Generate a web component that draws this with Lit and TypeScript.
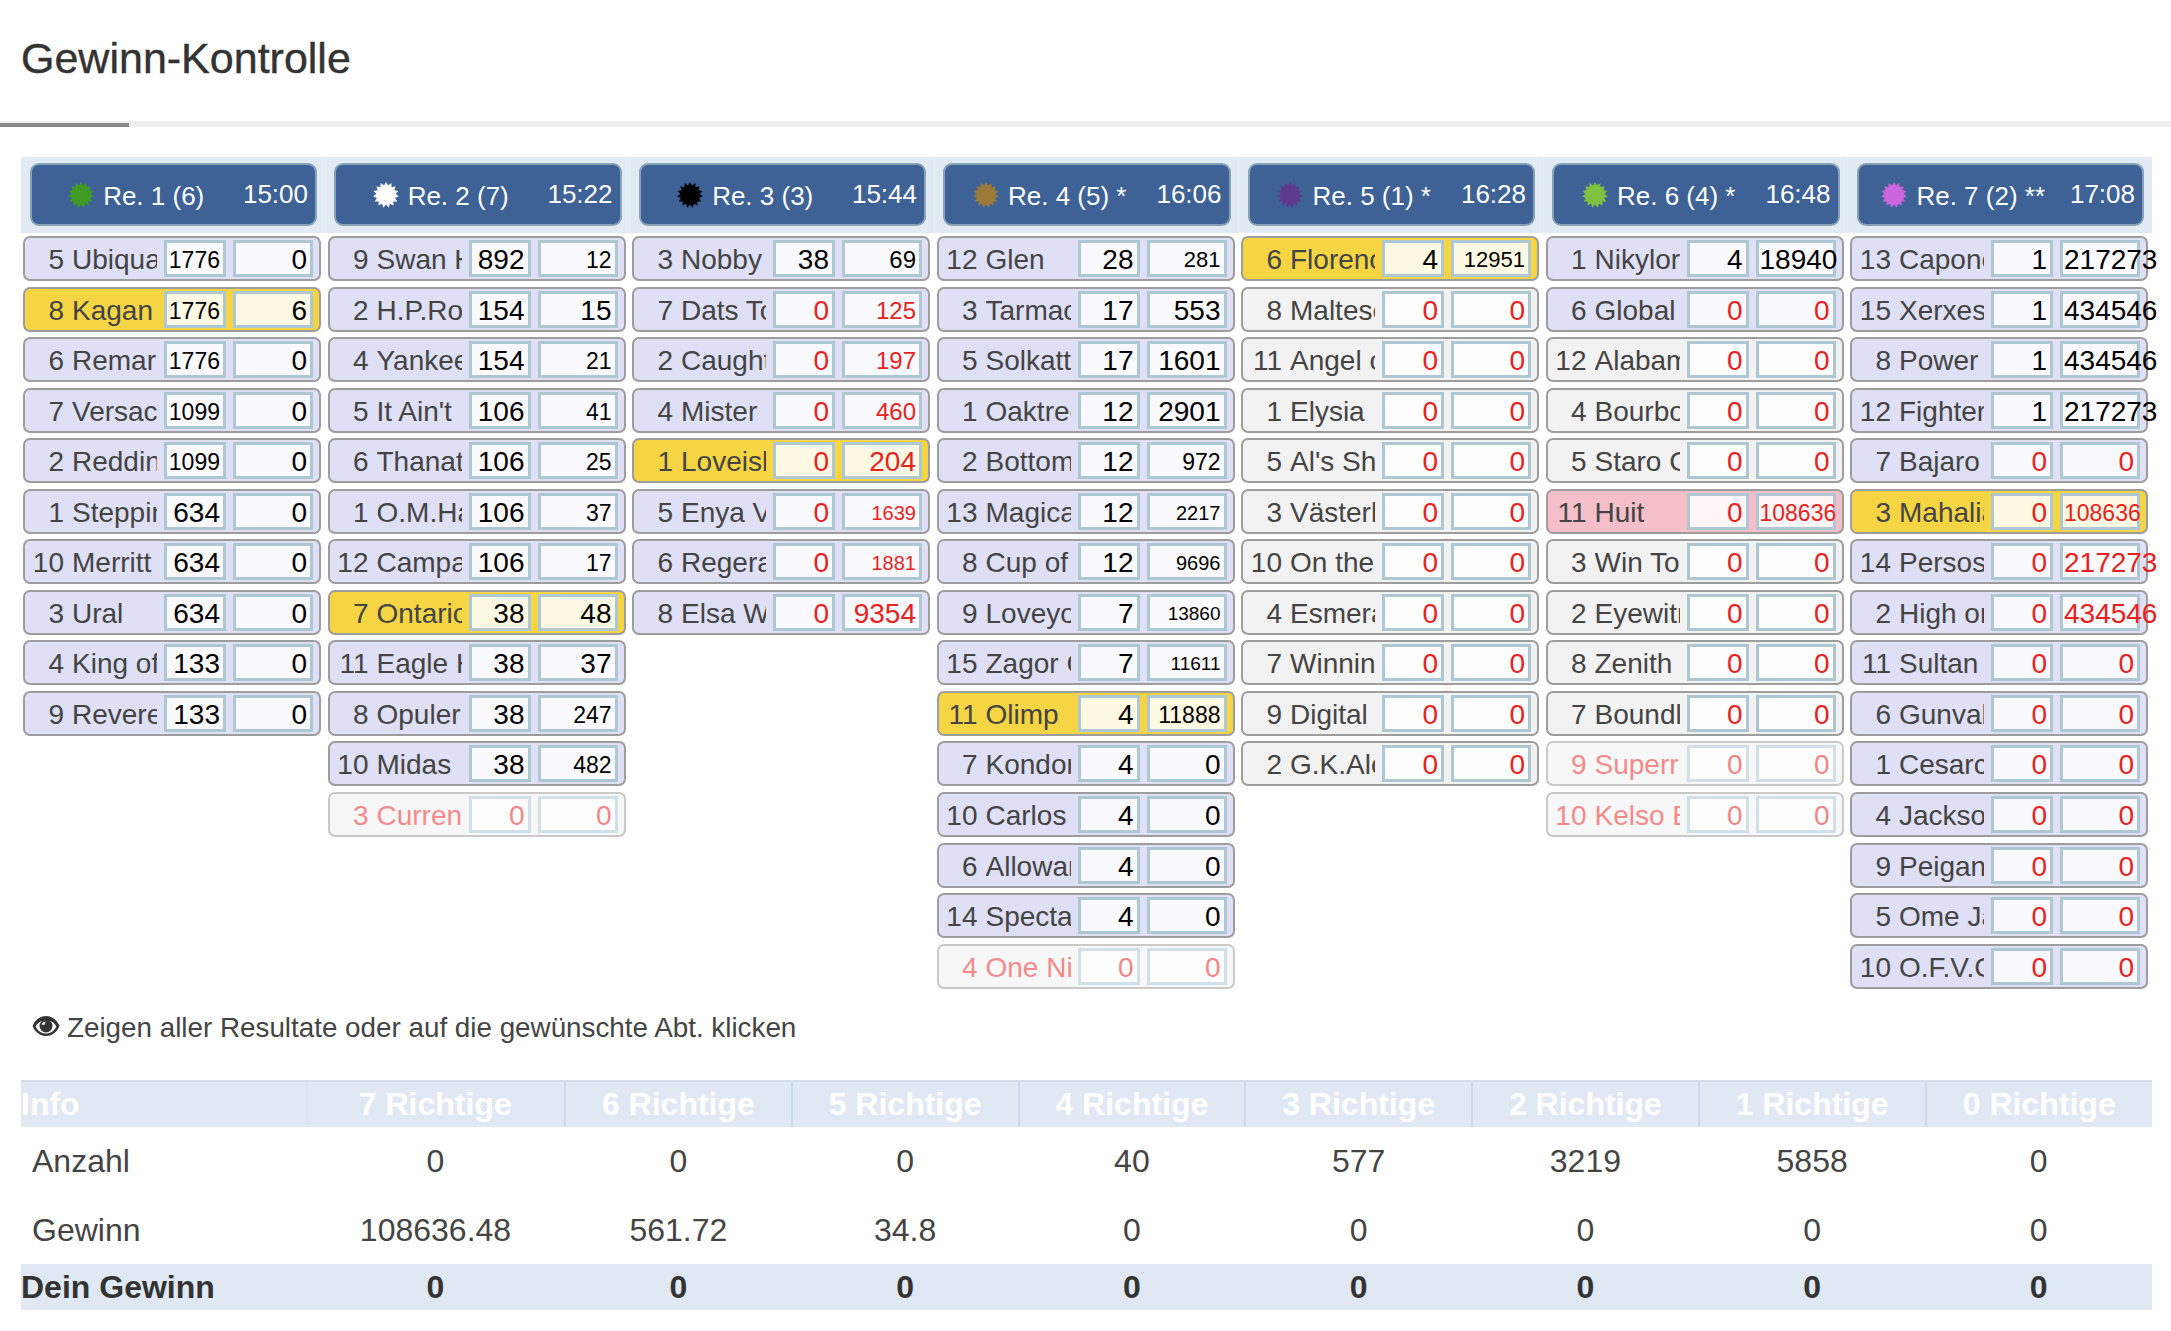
import { LitElement, html, css, svg } from "lit";
import { customElement } from "lit/decorators.js";

type Race = { label: string; time: string; star: string; rows: string[] };

// row format: number|name|first[:size]|second[:size]|state
const races: Race[] = [
  { label: "Re. 1 (6)", time: "15:00", star: "#3f9b24", rows: [
    "5|Ubiquarian|1776:23|0", "8|Kagan|1776:23|6|y", "6|Remarkable|1776:23|0", "7|Versace|1099:23|0", "2|Redding|1099:23|0",
    "1|Stepping|634|0", "10|Merritt|634|0", "3|Ural|634|0", "4|King of|133|0", "9|Revere|133|0" ] },
  { label: "Re. 2 (7)", time: "15:22", star: "#ffffff", rows: [
    "9|Swan Hill|892|12:23", "2|H.P.Rock|154|15", "4|Yankee|154|21:23", "5|It Ain't|106|41:23", "6|Thanatos|106|25:23",
    "1|O.M.Hall|106|37:23", "12|Campari|106|17:23", "7|Ontario|38|48|y", "11|Eagle Hill|38|37", "8|Opuler|38|247:23",
    "10|Midas|38|482:23", "3|Curren|0|0|x" ] },
  { label: "Re. 3 (3)", time: "15:44", star: "#000000", rows: [
    "3|Nobby|38|69:24", "7|Dats Torn|0|125:24", "2|Caught|0|197:24", "4|Mister|0|460:24", "1|Loveisland|0|204|y",
    "5|Enya Vale|0|1639:20", "6|Regera|0|1881:20", "8|Elsa West|0|9354" ] },
  { label: "Re. 4 (5) *", time: "16:06", star: "#9b7a3a", rows: [
    "12|Glen|28|281:22", "3|Tarmac|17|553", "5|Solkatten|17|1601", "1|Oaktree|12|2901", "2|Bottom|12|972:23",
    "13|Magical|12|2217:20", "8|Cup of|12|9696:20", "9|Loveyou|7|13860:19", "15|Zagor City|7|11611:19", "11|Olimp|4|11888:23|y",
    "7|Kondor|4|0", "10|Carlos|4|0", "6|Allowance|4|0", "14|Spectacle|4|0", "4|One Night|0|0|x" ] },
  { label: "Re. 5 (1) *", time: "16:28", star: "#5e3a8c", rows: [
    "6|Florence|4|12951:22|y", "8|Maltese|0|0|g", "11|Angel of|0|0|g", "1|Elysia|0|0|g", "5|Al's Shadow|0|0|g",
    "3|Västerbo|0|0|g", "10|On the|0|0|g", "4|Esmerald|0|0|g", "7|Winning|0|0|g", "9|Digital|0|0|g", "2|G.K.Alonso|0|0|g" ] },
  { label: "Re. 6 (4) *", time: "16:48", star: "#7fc241", rows: [
    "1|Nikylord|4|18940", "6|Global|0|0", "12|Alabama|0|0|g", "4|Bourbon|0|0|g", "5|Staro City|0|0|g",
    "11|Huit|0|108636:23|p", "3|Win To|0|0|g", "2|Eyewitness|0|0|g", "8|Zenith|0|0|g", "7|Boundless|0|0|g",
    "9|Superrun|0|0|x", "10|Kelso Bay|0|0|x" ] },
  { label: "Re. 7 (2) **", time: "17:08", star: "#cc66dd", rows: [
    "13|Capone|1|217273", "15|Xerxes|1|434546", "8|Power|1|434546", "12|Fighter|1|217273", "7|Bajaro|0|0",
    "3|Mahalia|0|108636:23|y", "14|Persos|0|217273", "2|High on|0|434546", "11|Sultan|0|0", "6|Gunvald|0|0",
    "1|Cesarco|0|0", "4|Jackson|0|0", "9|Peigan|0|0", "5|Ome Jan|0|0", "10|O.F.V.City|0|0" ] },
];

const heads = ["7 Richtige", "6 Richtige", "5 Richtige", "4 Richtige", "3 Richtige", "2 Richtige", "1 Richtige", "0 Richtige"];
const anzahl = ["0", "0", "0", "40", "577", "3219", "5858", "0"];
const gewinn = ["108636.48", "561.72", "34.8", "0", "0", "0", "0", "0"];

function starPoints(n: number, cx: number, cy: number, outer: number, inner: number) {
  const pts: string[] = [];
  for (let i = 0; i < n * 2; i++) {
    const r = i % 2 ? inner : outer;
    const a = (Math.PI * i) / n - Math.PI / 2;
    pts.push(`${(cx + r * Math.cos(a)).toFixed(2)},${(cy + r * Math.sin(a)).toFixed(2)}`);
  }
  return pts.join(" ");
}

@customElement("app-root")
export class AppRoot extends LitElement {
  static styles = css`
    :host {
      display: block;
      background: #fff;
      font-family: "Liberation Sans", Arial, sans-serif;
      color: #444;
      height: 1331px;
      overflow: hidden;
    }
    .title {
      margin: 0;
      height: 121px;
      box-sizing: border-box;
      padding: 35px 0 0 21px;
      font-size: 43px;
      line-height: 46px;
      font-weight: 400;
      color: #333;
      -webkit-text-stroke: 0.4px #333;
    }
    .rule {
      height: 6px;
      box-sizing: border-box;
      padding-top: 2px;
      background: #eeeeee;
      margin-bottom: 30px;
    }
    .rule div {
      width: 129px;
      height: 4px;
      background: #8a8a8a;
    }
    .board {
      margin-left: 21px;
      width: 2131px;
    }
    .heads, .cols {
      display: grid;
      grid-template-columns: repeat(6, 304.5px) 304px;
    }
    .heads {
      background: #e2eaf4;
      height: 76px;
      margin-bottom: 3px;
    }
    .hcell {
      box-sizing: border-box;
      padding: 6px 0 7px 8.5px;
      border-right: 1px solid #e9eff7;
    }
    .hcell:last-child { border-right: none; }
    .btn {
      box-sizing: border-box;
      width: 287.5px;
      height: 63px;
      display: flex;
      align-items: center;
      background: #3e6296;
      border: 2px solid #86a3b9;
      border-radius: 9px;
      color: #fff;
      font-size: 26px;
      padding-right: 7px;
    }
    .label {
      flex: 1;
      min-width: 0;
      display: flex;
      align-items: center;
      justify-content: center;
      gap: 9px;
      margin-right: 2px;
    }
    .label span {
      padding-top: 4px;
      white-space: nowrap;
    }
    .star {
      width: 26px;
      height: 26px;
      flex: none;
    }
    .time { flex: none; }
    .col {
      display: flex;
      flex-direction: column;
      gap: 5.55px;
      padding-left: 2px;
    }
    .row {
      box-sizing: border-box;
      width: 298px;
      height: 45px;
      display: flex;
      align-items: center;
      border: 2px solid #9d9d9d;
      border-radius: 7px;
      background: #dfdff5;
      font-size: 28px;
      padding-right: 6px;
    }
    .row.y { background: #f6d544; }
    .row.g { background: #f2f2f2; }
    .row.p { background: #f5bfc9; }
    .row.x { background: #f2f2f2; opacity: 0.55; }
    .row.x .no, .row.x .name { color: #ee2a2a; }
    .no {
      flex: none;
      width: 40px;
      margin-right: 8px;
      text-align: right;
      padding-top: 3px;
      margin-left: -1px;
      white-space: nowrap;
    }
    .name {
      flex: 1;
      min-width: 0;
      overflow: hidden;
      white-space: nowrap;
      margin-right: 7px;
      padding-top: 3px;
      line-height: 34px;
    }
    .val {
      flex: none;
      box-sizing: border-box;
      height: 37px;
      border: 3px solid #adc8d2;
      background: rgba(255, 255, 255, 0.85);
      color: #000;
      text-align: right;
      white-space: nowrap;
      padding: 0 3px 0 1px;
      line-height: 34px;
    }
    .val.a { width: 62px; margin-right: 7px; }
    .val.b { width: 80px; }
    .val.red { color: #e8231f; }
    .note {
      display: flex;
      align-items: center;
      gap: 7px;
      margin: 19px 0 0 32px;
      height: 40px;
      font-size: 27.8px;
      color: #444;
    }
    .eye { width: 28px; height: 22px; flex: none; margin-top: -4px; }
    table {
      margin: 32px 0 0 21px;
      width: 2131px;
      table-layout: fixed;
      border-collapse: collapse;
      font-size: 32px;
      color: #444;
    }
    .c0 { width: 285px; }
    .c1 { width: 259px; }
    .cn { width: 226.75px; }
    th, td { text-align: center; padding: 0; }
    thead tr { height: 46px; background: #e0e8f4; }
    th {
      color: #fff;
      font-weight: 700;
      border-top: 2px solid #d4dfe9;
      border-left: 2px solid #ccd9e4;
    }
    th:first-child { text-align: left; border-left: none; }
    th:nth-child(2) { border-left: 1px solid #dbe5f0; }
    tbody td:first-child { text-align: left; padding-left: 11px; }
    .r1 { height: 70px; }
    .r2 { height: 67px; }
    .r3 { height: 46px; background: #e0e8f4; font-weight: 700; color: #333; }
    .r3 td { padding-top: 2px; }
    tbody .r3 td:first-child { padding-left: 0; }
  `;

  private renderRow(r: string) {
    const [no, name, a, b, state = ""] = r.split("|");
    const [av, as = "28"] = a.split(":");
    const [bv, bs = "28"] = b.split(":");
    const red = av === "0" ? "red" : "";
    return html`<div class="row ${state}">
      <span class="no">${no}</span>
      <span class="name">${name}</span>
      <span class="val a ${red}" style="font-size:${as}px">${av}</span>
      <span class="val b ${red}" style="font-size:${bs}px">${bv}</span>
    </div>`;
  }

  render() {
    const pts = starPoints(15, 13, 13, 13, 9.6);
    return html`
      <h1 class="title">Gewinn-Kontrolle</h1>
      <div class="rule"><div></div></div>
      <div class="board">
        <div class="heads">
          ${races.map(
            (r) => html`<div class="hcell">
              <div class="btn">
                <div class="label">
                  <svg class="star" viewBox="0 0 26 26">${svg`<polygon points=${pts} fill=${r.star}></polygon>`}</svg>
                  <span>${r.label}</span>
                </div>
                <div class="time">${r.time}</div>
              </div>
            </div>`
          )}
        </div>
        <div class="cols">
          ${races.map((r) => html`<div class="col">${r.rows.map((x) => this.renderRow(x))}</div>`)}
        </div>
      </div>
      <div class="note">
        <svg class="eye" viewBox="0 0 28 22">
          <path fill="#333" d="M14 1C7.5 1 2.8 5.5 0.5 11 2.8 16.5 7.5 21 14 21s11.2-4.5 13.5-10C25.2 5.5 20.500 1 14 1z"></path>
          <path fill="#fff" d="M3.6 11.500C5.800 7.500 9 5.500 14 5.500s8.200 2 10.400 6C22.200 16 18.500 18.500 14 18.500S5.800 16 3.600 11.500z"></path>
          <circle cx="14" cy="11" r="6.500" fill="#333"></circle>
          <path fill="#fff" d="M9.500 9.500C10.500 7.500 12 6.800 14 6.800c-1 1-1.500 2-1.500 3.200z"></path>
        </svg>
        <span>Zeigen aller Resultate oder auf die gewünschte Abt. klicken</span>
      </div>
      <table>
        <colgroup>
          <col class="c0" /><col class="c1" />
          ${heads.slice(1, 7).map(() => html`<col class="cn" />`)}
          <col />
        </colgroup>
        <thead>
          <tr><th>Info</th>${heads.map((h) => html`<th>${h}</th>`)}</tr>
        </thead>
        <tbody>
          <tr class="r1"><td>Anzahl</td>${anzahl.map((v) => html`<td>${v}</td>`)}</tr>
          <tr class="r2"><td>Gewinn</td>${gewinn.map((v) => html`<td>${v}</td>`)}</tr>
          <tr class="r3"><td>Dein Gewinn</td>${heads.map(() => html`<td>0</td>`)}</tr>
        </tbody>
      </table>
    `;
  }
}
